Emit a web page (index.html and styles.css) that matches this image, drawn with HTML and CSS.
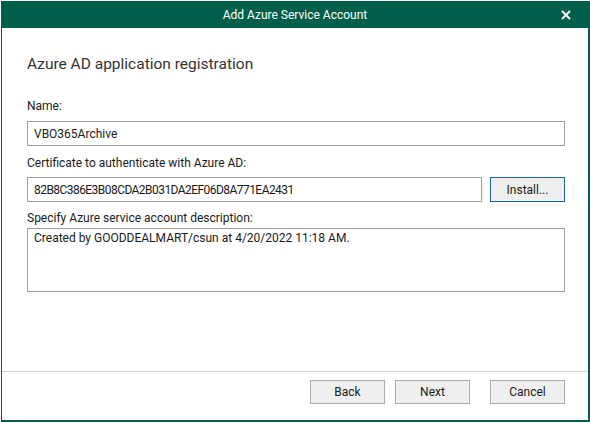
FILE: index.html
```html
<!DOCTYPE html>
<html lang="en">
<head>
  <meta charset="UTF-8" />
  <title>Add Azure Service Account</title>
  <link rel="stylesheet" href="styles.css">
</head>
<body>

  <div class="window">
    <div class="titlebar">
      <span></span>
      <span class="title">Add Azure Service Account</span>
      <button class="close-btn" title="Close">
        <svg width="10" height="10" viewBox="0 0 10 10">
          <path d="M1 1 L9 9 M9 1 L1 9" stroke="#ffffff" stroke-width="2" fill="none" />
        </svg>
      </button>
    </div>

    <div class="content">
      <h2>Azure AD application registration</h2>

      <label class="label label-name">Name:</label>
      <input class="field field-name" type="text" value="VBO365Archive">

      <label class="label label-cert">Certificate to authenticate with Azure AD:</label>
      <div class="row">
        <input class="field field-cert" type="text" value="82B8C386E3B08CDA2B031DA2EF06D8A771EA2431">
        <button class="btn btn-default">Install...</button>
      </div>

      <label class="label label-desc">Specify Azure service account description:</label>
      <textarea class="field field-desc">Created by GOODDEALMART/csun at 4/20/2022 11:18 AM.</textarea>
    </div>

    <div class="footer">
      <button class="btn">Back</button>
      <button class="btn btn-next">Next</button>
      <button class="btn btn-cancel">Cancel</button>
    </div>
  </div>

</body>
</html>
```

FILE: styles.css
```css
body {
  margin: 0;
  background-color: #ffffff;
  font-family: Roboto, "Noto Sans", Arial, sans-serif;
  font-size: 12px;
  color: #1a1a1a;
}
.window {
  margin: 1px 0 0 1px;
  width: 589px;
  height: 421px;
  box-sizing: border-box;
  border: solid #005f4b;
  border-width: 0 2px 2px 1px;
  display: flex;
  flex-direction: column;
  background: #ffffff;
}
.titlebar {
  height: 27px;
  flex-shrink: 0;
  background-color: #005f4b;
  color: #ffffff;
  display: grid;
  grid-template-columns: 1fr auto 1fr;
  align-items: center;
}
.title {
  font-size: 12px;
  line-height: 16px;
}
.close-btn {
  justify-self: end;
  width: 10px;
  height: 10px;
  margin-right: 17px;
  margin-top: 1px;
  padding: 0;
  border: none;
  background: none;
  display: flex;
}
.content {
  flex: 1;
  padding: 0 23px 0 25px;
  display: flex;
  flex-direction: column;
}
h2 {
  margin: 26px 0 0 0;
  font-size: 15.5px;
  line-height: 20px;
  font-weight: normal;
  color: #333333;
}
.label {
  display: block;
  line-height: 16px;
}
.label-name {
  margin-top: 24px;
}
.label-cert {
  margin-top: 9px;
}
.label-desc {
  margin-top: 8px;
}
.field {
  box-sizing: border-box;
  border: 1px solid #a0a0a0;
  font-family: inherit;
  font-size: 12px;
  color: #1a1a1a;
  padding: 0 6px;
  height: 25px;
  outline: none;
  background: #ffffff;
}
.field-name {
  margin-top: 7px;
  width: 538px;
}
.row {
  margin-top: 6px;
  display: flex;
  gap: 8px;
}
.field-cert {
  width: 455px;
  letter-spacing: -0.55px;
}
.field-desc {
  margin-top: 2px;
  width: 538px;
  height: 64px;
  padding: 1px 6px;
  line-height: 16px;
  resize: none;
}
.btn {
  box-sizing: border-box;
  width: 75px;
  height: 24px;
  padding: 0;
  border: 1px solid #adadad;
  background-color: #efefef;
  font-family: inherit;
  font-size: 12px;
  color: #1a1a1a;
}
.btn-default {
  height: 25px;
  border-color: #1c64a8;
}
.footer {
  height: 40px;
  flex-shrink: 0;
  border-top: 1px solid #d2d2d2;
  padding: 8px 23px 0 0;
  display: flex;
  justify-content: flex-end;
  align-items: flex-start;
}
.btn-next {
  margin-left: 10px;
}
.btn-cancel {
  margin-left: 20px;
}
```
